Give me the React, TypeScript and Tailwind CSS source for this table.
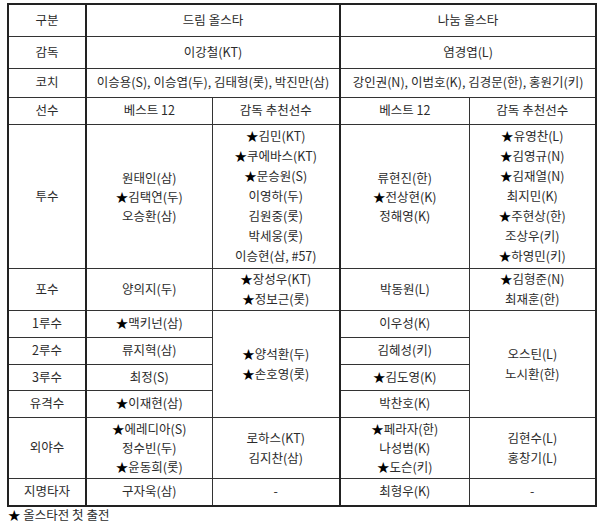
const cell = 'border border-[#333] text-center align-middle p-0'
const thick = 'border-r-2 border-r-[#222]'

const Name = ({ t }: { t: string }) =>
  t.startsWith('★') ? (
    <>
      <span className="text-black">★</span>
      {t.slice(1)}
    </>
  ) : (
    <>{t}</>
  )

const Lines = ({ items, lh = 'leading-[20px]' }: { items: string[]; lh?: string }) => (
  <div className={lh}>
    {items.map((t) => (
      <div key={t}>
        <Name t={t} />
      </div>
    ))}
  </div>
)

export default function App() {
  return (
    <div className="w-[600px] h-[522px] overflow-hidden bg-white pt-[3px] pl-[7px] text-[12.5px] text-[#2b2b2b] font-['Noto_Sans_CJK_KR','Noto_Sans',sans-serif]">
      <table className="border-collapse table-fixed w-[588px] border-2 border-[#222]">
        <colgroup>
          <col className="w-[78px]" />
          <col className="w-[126px]" />
          <col className="w-[128px]" />
          <col className="w-[129px]" />
          <col className="w-[127px]" />
        </colgroup>
        <tbody>
          <tr className="h-[32px]">
            <td className={`${cell} ${thick}`}>구분</td>
            <td colSpan={2} className={`${cell} ${thick}`}>드림 올스타</td>
            <td colSpan={2} className={cell}>나눔 올스타</td>
          </tr>
          <tr className="h-[32px]">
            <td className={`${cell} ${thick}`}>감독</td>
            <td colSpan={2} className={`${cell} ${thick}`}>이강철(KT)</td>
            <td colSpan={2} className={cell}>염경엽(L)</td>
          </tr>
          <tr className="h-[29px]">
            <td className={`${cell} ${thick}`}>코치</td>
            <td colSpan={2} className={`${cell} ${thick}`}>이승용(S), 이승엽(두), 김태형(롯), 박진만(삼)</td>
            <td colSpan={2} className={cell}>강인권(N), 이범호(K), 김경문(한), 홍원기(키)</td>
          </tr>
          <tr className="h-[27px]">
            <td className={`${cell} ${thick}`}>선수</td>
            <td className={cell}>베스트 12</td>
            <td className={`${cell} ${thick}`}>감독 추천선수</td>
            <td className={cell}>베스트 12</td>
            <td className={cell}>감독 추천선수</td>
          </tr>
          <tr className="h-[144px]">
            <td className={`${cell} ${thick}`}>투수</td>
            <td className={cell}>
              <Lines lh="leading-[19px]" items={['원태인(삼)', '★김택연(두)', '오승환(삼)']} />
            </td>
            <td className={`${cell} ${thick}`}>
              <Lines
                items={['★김민(KT)', '★쿠에바스(KT)', '★문승원(S)', '이영하(두)', '김원중(롯)', '박세웅(롯)', '이승현(삼, #57)']}
              />
            </td>
            <td className={cell}>
              <Lines lh="leading-[19px]" items={['류현진(한)', '★전상현(K)', '정해영(K)']} />
            </td>
            <td className={cell}>
              <Lines
                items={['★유영찬(L)', '★김영규(N)', '★김재열(N)', '최지민(K)', '★주현상(한)', '조상우(키)', '★하영민(키)']}
              />
            </td>
          </tr>
          <tr className="h-[42px]">
            <td className={`${cell} ${thick}`}>포수</td>
            <td className={cell}>양의지(두)</td>
            <td className={`${cell} ${thick}`}>
              <Lines items={['★장성우(KT)', '★정보근(롯)']} />
            </td>
            <td className={cell}>박동원(L)</td>
            <td className={cell}>
              <Lines items={['★김형준(N)', '최재훈(한)']} />
            </td>
          </tr>
          <tr className="h-[27px]">
            <td className={`${cell} ${thick}`}>1루수</td>
            <td className={cell}>
              <Name t="★맥키넌(삼)" />
            </td>
            <td rowSpan={4} className={`${cell} ${thick}`}>
              <Lines items={['★양석환(두)', '★손호영(롯)']} />
            </td>
            <td className={cell}>이우성(K)</td>
            <td rowSpan={4} className={cell}>
              <Lines items={['오스틴(L)', '노시환(한)']} />
            </td>
          </tr>
          <tr className="h-[27px]">
            <td className={`${cell} ${thick}`}>2루수</td>
            <td className={cell}>류지혁(삼)</td>
            <td className={cell}>김혜성(키)</td>
          </tr>
          <tr className="h-[26px]">
            <td className={`${cell} ${thick}`}>3루수</td>
            <td className={cell}>최정(S)</td>
            <td className={cell}>
              <Name t="★김도영(K)" />
            </td>
          </tr>
          <tr className="h-[27px]">
            <td className={`${cell} ${thick}`}>유격수</td>
            <td className={cell}>
              <Name t="★이재현(삼)" />
            </td>
            <td className={cell}>박찬호(K)</td>
          </tr>
          <tr className="h-[61px]">
            <td className={`${cell} ${thick}`}>외야수</td>
            <td className={cell}>
              <Lines lh="leading-[19px]" items={['★에레디아(S)', '정수빈(두)', '★윤동희(롯)']} />
            </td>
            <td className={`${cell} ${thick}`}>
              <Lines items={['로하스(KT)', '김지찬(삼)']} />
            </td>
            <td className={cell}>
              <Lines lh="leading-[19px]" items={['★페라자(한)', '나성범(K)', '★도슨(키)']} />
            </td>
            <td className={cell}>
              <Lines items={['김현수(L)', '홍창기(L)']} />
            </td>
          </tr>
          <tr className="h-[28px]">
            <td className={`${cell} ${thick}`}>지명타자</td>
            <td className={cell}>구자욱(삼)</td>
            <td className={`${cell} ${thick}`}>-</td>
            <td className={cell}>최형우(K)</td>
            <td className={cell}>-</td>
          </tr>
        </tbody>
      </table>
      <p className="leading-[12px] pt-[2px] pl-px">
        <span className="text-black">★</span> 올스타전 첫 출전
      </p>
    </div>
  )
}
